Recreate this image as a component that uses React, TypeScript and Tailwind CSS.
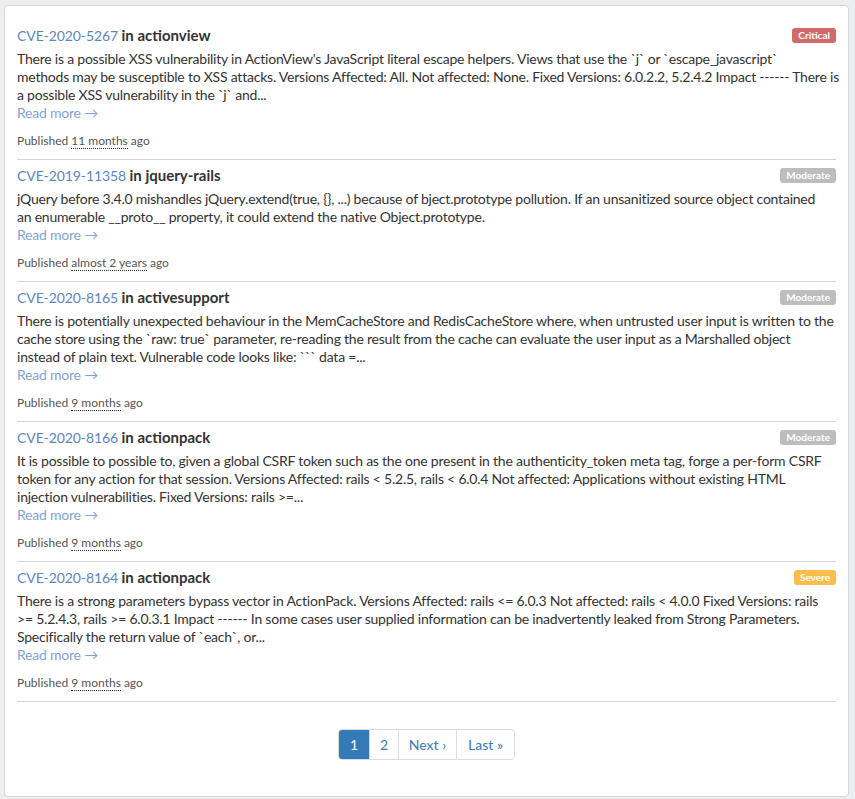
import React from "react";

type Entry = {
  id: string;
  pkg: string;
  sev: "Critical" | "Moderate" | "Severe";
  lines: string[];
  published: string;
};

const entries: Entry[] = [
  {
    id: "CVE-2020-5267",
    pkg: "actionview",
    sev: "Critical",
    lines: [
      "There is a possible XSS vulnerability in ActionView's JavaScript literal escape helpers. Views that use the `j` or `escape_javascript`",
      "methods may be susceptible to XSS attacks. Versions Affected: All. Not affected: None. Fixed Versions: 6.0.2.2, 5.2.4.2 Impact ------ There is",
      "a possible XSS vulnerability in the `j` and...",
    ],
    published: "11 months",
  },
  {
    id: "CVE-2019-11358",
    pkg: "jquery-rails",
    sev: "Moderate",
    lines: [
      "jQuery before 3.4.0 mishandles jQuery.extend(true, {}, ...) because of bject.prototype pollution. If an unsanitized source object contained",
      "an enumerable __proto__ property, it could extend the native Object.prototype.",
    ],
    published: "almost 2 years",
  },
  {
    id: "CVE-2020-8165",
    pkg: "activesupport",
    sev: "Moderate",
    lines: [
      "There is potentially unexpected behaviour in the MemCacheStore and RedisCacheStore where, when untrusted user input is written to the",
      "cache store using the `raw: true` parameter, re-reading the result from the cache can evaluate the user input as a Marshalled object",
      "instead of plain text. Vulnerable code looks like: ``` data =...",
    ],
    published: "9 months",
  },
  {
    id: "CVE-2020-8166",
    pkg: "actionpack",
    sev: "Moderate",
    lines: [
      "It is possible to possible to, given a global CSRF token such as the one present in the authenticity_token meta tag, forge a per-form CSRF",
      "token for any action for that session. Versions Affected: rails < 5.2.5, rails < 6.0.4 Not affected: Applications without existing HTML",
      "injection vulnerabilities. Fixed Versions: rails >=...",
    ],
    published: "9 months",
  },
  {
    id: "CVE-2020-8164",
    pkg: "actionpack",
    sev: "Severe",
    lines: [
      "There is a strong parameters bypass vector in ActionPack. Versions Affected: rails <= 6.0.3 Not affected: rails < 4.0.0 Fixed Versions: rails",
      ">= 5.2.4.3, rails >= 6.0.3.1 Impact ------ In some cases user supplied information can be inadvertently leaked from Strong Parameters.",
      "Specifically the return value of `each`, or...",
    ],
    published: "9 months",
  },
];

function Badge({ sev }: { sev: Entry["sev"] }) {
  if (sev === "Critical")
    return (
      <span className="rounded-[3px] bg-[#d36a6a] px-[6px] py-[2px] text-[10px] font-bold leading-[11px] text-white">
        Critical
      </span>
    );
  if (sev === "Severe")
    return (
      <span className="rounded-[3px] bg-[#fcbd4b] px-[6px] py-[2px] text-[10px] font-bold leading-[11px] text-white">
        Severe
      </span>
    );
  return (
    <span className="rounded-[3px] bg-[#bdbdbd] px-[6px] py-[2px] text-[10px] font-bold leading-[11px] text-white">
      Moderate
    </span>
  );
}

function Item({ e }: { e: Entry }) {
  return (
    <div className="border-b border-[#d4d4d4] pt-[5px] pb-[9px]">
      <div className="flex h-[20px] items-center justify-between">
        <div className="text-[14px] leading-[20px] tracking-[-0.1px]">
          <a className="text-[#5a86c5]">{e.id}</a>{" "}
          <span className="text-[15px] font-bold tracking-[0px] text-[#333]">in {e.pkg}</span>
        </div>
        <Badge sev={e.sev} />
      </div>
      <div className="mt-[5px] text-[14px] leading-[18px] tracking-[-0.22px] text-[#333]">
        {e.lines.map((l, i) => (
          <div key={i} className="whitespace-nowrap">
            {l}
          </div>
        ))}
        <a className="block text-[#82a3d6]">Read more →</a>
      </div>
      <div className="mt-[10px] text-[12px] leading-[18px] text-[#555]">
        Published{" "}
        <span className="border-b border-dotted border-[#333]">{e.published}</span> ago
      </div>
    </div>
  );
}

export default function App() {
  return (
    <div
      className="min-h-[799px] bg-[#eceeef] pt-[5px] pl-[4px] pr-[6px]"
      style={{ fontFamily: "Lato, 'Noto Sans', sans-serif" }}
    >
      <div className="rounded-[4px] border border-[#d6d8d8] bg-white px-[12px] pt-[14px] pb-[36px]">
        {entries.map((e) => (
          <Item key={e.id} e={e} />
        ))}
        <div className="mt-[27px] flex justify-center">
          <div className="flex h-[31px] overflow-hidden rounded-[4px] border border-[#ddd] text-[14px] text-[#337ab7]">
            <span className="flex w-[30px] items-center justify-center bg-[#337ab7] text-white">1</span>
            <span className="flex w-[29px] items-center justify-center border-l border-[#ddd]">2</span>
            <span className="flex w-[58px] items-center justify-center border-l border-[#ddd]">Next ›</span>
            <span className="flex w-[58px] items-center justify-center border-l border-[#ddd]">Last »</span>
          </div>
        </div>
      </div>
    </div>
  );
}
